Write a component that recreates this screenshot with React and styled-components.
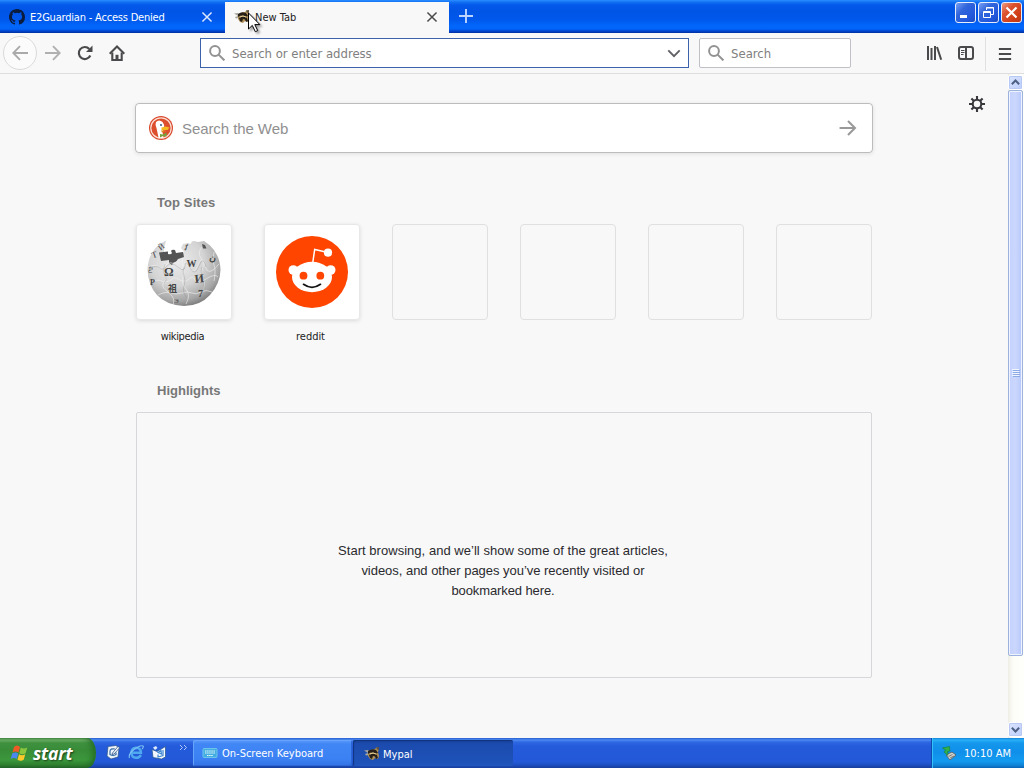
import React from "react";
import styled, { createGlobalStyle, css } from "styled-components";

const tahoma = `"DejaVu Sans Condensed", "DejaVu Sans", Tahoma, sans-serif`;
const arial = `"Liberation Sans", Arial, sans-serif`;

const GlobalStyle = createGlobalStyle`
  *, *::before, *::after { box-sizing: border-box; }
  body { margin: 0; overflow: hidden; background: #f8f8f8; }
  svg { display: block; flex: none; }
`;

const Desktop = styled.div`
  position: relative;
  width: 1024px;
  height: 768px;
  display: flex;
  flex-direction: column;
  overflow: hidden;
  font-family: ${tahoma};
`;

const Label = styled.span`
  white-space: nowrap;
  font-size: ${(p) => p.$size || 11}px;
  letter-spacing: ${(p) => p.$track || 0}px;
  color: ${(p) => p.$color || "#222"};
`;

/* Title bar and tabs */
const TitleBar = styled.header`
  height: 33px;
  flex: none;
  display: flex;
  background: linear-gradient(#2c8cff 0, #1272f4 2px, #0458ea 5px, #0055e5 12px, #0058ec 20px, #0367fc 26px, #0264f8 29px, #0144cf 31px, #002fa0 33px);
`;

const Tab = styled.div`
  width: ${(p) => (p.$active ? 224 : 225)}px;
  display: flex;
  align-items: center;
  padding: 1px 11px 0 9px;
  ${(p) =>
    p.$active &&
    css`
      margin-top: 2px;
      padding: 0 10px 1px 9px;
      background: #f8f8f8;
    `}
`;

const TabTitle = styled(Label)`
  flex: 1;
  margin-left: ${(p) => p.$gap}px;
`;

const NewTabButton = styled.div`
  padding: 9px 0 0 10px;
`;

const WindowControls = styled.div`
  display: flex;
  gap: 2px;
  margin-left: auto;
  padding: 2px 2px 0 0;
`;

const ControlButton = styled.div`
  width: 21px;
  height: 21px;
  border: 1px solid #e6edfb;
  border-radius: 3px;
  background: ${(p) =>
    p.$close
      ? "linear-gradient(135deg, #ee9b82, #dc5230 35%, #cf3d15 75%, #b83a1d)"
      : "linear-gradient(135deg, #7aa0f5, #3266dc 35%, #2257dc 75%, #184bc0)"};
`;

/* Navigation toolbar */
const Toolbar = styled.nav`
  height: 41px;
  flex: none;
  display: flex;
  align-items: center;
  background: #f8f8f8;
  border-bottom: 1px solid #dedee0;
`;

const BackButton = styled.div`
  width: 34px;
  height: 34px;
  margin-left: 3px;
  border: 1px solid #dadada;
  border-radius: 50%;
  background: #fbfbfb;
  display: grid;
  place-items: center;
`;

const ToolButton = styled.div`
  width: 32px;
  height: 32px;
  display: grid;
  place-items: center;
`;

const NavButtons = styled.div`
  display: flex;
  align-items: center;
  width: 200px;
`;

const Field = styled.div`
  width: ${(p) => p.$width}px;
  height: 30px;
  margin-right: 10px;
  padding: 0 7px 0 8px;
  display: flex;
  align-items: center;
  gap: 7px;
  background: #fff;
  border: 1px solid ${(p) => (p.$focused ? "#3c62ac" : "#c0c0c8")};
  border-radius: ${(p) => (p.$focused ? 0 : 2)}px;
  svg:last-child { margin-left: auto; }
`;

const ToolGroup = styled.div`
  margin-left: auto;
  display: flex;
  align-items: center;
  align-self: stretch;
`;

const MenuSlot = styled.div`
  align-self: stretch;
  margin: 4px 0 2px 3px;
  width: 39px;
  border-left: 1px solid #e0e0e3;
  display: grid;
  place-items: center;
`;

/* Page */
const Viewport = styled.div`
  flex: 1;
  display: flex;
  min-height: 0;
  background: #f8f8f8;
`;

const Page = styled.main`
  position: relative;
  width: 1008px;
  padding: 29px 135px 0;
  font-family: ${arial};
`;

const Preferences = styled.div`
  position: absolute;
  top: 22px;
  right: 23px;
`;

const WebSearch = styled.div`
  width: 738px;
  height: 50px;
  padding: 0 15px 0 13px;
  display: flex;
  align-items: center;
  background: #fff;
  border: 1px solid #bcbcbc;
  border-radius: 4px;
  box-shadow: 0 1px 4px rgba(12, 12, 13, 0.1);
`;

const WebSearchHint = styled(Label)`
  flex: 1;
  margin-left: 9px;
`;

const SectionTitle = styled.h2`
  margin: ${(p) => p.$top}px 0 0 22px;
  height: 16px;
  font: bold 13px/16px ${arial};
  letter-spacing: ${(p) => p.$track}px;
  color: #777;
`;

const SiteRow = styled.div`
  display: flex;
  gap: 32px;
  margin: 13px 0 0 1px;
`;

const Site = styled.div`
  width: 96px;
  display: flex;
  flex-direction: column;
  align-items: center;
`;

const Tile = styled.div`
  width: 96px;
  height: 96px;
  border-radius: 4px;
  overflow: hidden;
  border: ${(p) => (p.$filled ? "0" : "1px solid #e0e0e0")};
  background: ${(p) => (p.$filled ? "#fff" : "transparent")};
  box-shadow: ${(p) => (p.$filled ? "inset 0 0 0 1px #e8e8e8, 0 1px 4px rgba(12, 12, 13, 0.12)" : "none")};
`;

const SiteName = styled(Label)`
  height: 16px;
  margin: 9px 3px 0 0;
  line-height: 16px;
  font-family: ${tahoma};
`;

const HighlightsBox = styled.section`
  width: 736px;
  height: 266px;
  margin: 13px 0 0 1px;
  padding: 128px 2px 0 0;
  border: 1px solid #d7d7db;
  border-radius: 2px;
  text-align: center;
`;

const MessageLine = styled.div`
  height: 20px;
  font-size: 13px;
  line-height: 20px;
  letter-spacing: ${(p) => p.$track}px;
  color: #2a2a2e;
`;

/* Scroll bar */
const ScrollBar = styled.aside`
  width: 16px;
  display: flex;
  flex-direction: column;
  padding: 1px 1px 1px 0;
  background: linear-gradient(90deg, #eeede5, #fdfdf8 5px, #fefefb);
`;

const ScrollButton = styled.div`
  height: 15px;
  display: grid;
  place-items: center;
  border: 1px solid #fff;
  border-radius: 2px;
  background: linear-gradient(135deg, #dbe5ff, #bccdfb);
  box-shadow: inset 0 0 0 1px #b8c9f3;
`;

const ScrollThumb = styled.div`
  height: 566px;
  margin: 0 0 auto;
  display: grid;
  place-items: center;
  border: 1px solid #9db3de;
  border-radius: 2px;
  box-shadow: inset 0 0 0 1px #eef3ff;
  background: linear-gradient(90deg, #c4d2fc, #cbd6fd 50%, #b6c8fa);
`;

/* Taskbar */
const Taskbar = styled.footer`
  height: 30px;
  flex: none;
  display: flex;
  background: linear-gradient(#2a5fd0 0, #4b8af2 2px, #2f68e2 4px, #245bdb 8px, #2359d8 24px, #1d4ec0 27px, #183e9c 30px);
`;

const StartButton = styled.div`
  width: 96px;
  display: flex;
  align-items: center;
  padding-left: 10px;
  gap: 5px;
  border-radius: 0 9px 9px 0 / 0 15px 15px 0;
  background: linear-gradient(#4a8a4a 0, #6bb066 2px, #3f9140 5px, #388c38 12px, #3c983c 22px, #2f8030 27px, #22602a 30px);
  box-shadow: inset -6px 0 7px -3px #236b25;
`;

const StartText = styled.span`
  font: italic bold 17.5px/26px "Open Sans", "Noto Sans", sans-serif;
  letter-spacing: -0.2px;
  color: #fff;
  text-shadow: 1px 1px 2px rgba(0, 0, 0, 0.6);
`;

const QuickLaunch = styled.div`
  width: 97px;
  display: flex;
  align-items: flex-start;
  gap: 7px;
  padding: 6px 0 0 9px;
`;

const TaskButton = styled.div`
  width: ${(p) => p.$width}px;
  height: 26px;
  margin: 2px 1px 0 0;
  padding-left: ${(p) => p.$indent}px;
  padding-top: ${(p) => (p.$pressed ? 2 : 0)}px;
  display: flex;
  align-items: center;
  gap: ${(p) => (p.$pressed ? 3 : 4)}px;
  border-radius: 2px;
  background: ${(p) =>
    p.$pressed
      ? "linear-gradient(#17419a, #1c4bae 4px, #1e52b8 22px, #2156bd)"
      : "linear-gradient(#5a9bfb, #4186f5 4px, #3c81f3 19px, #3372e4)"};
  box-shadow: ${(p) =>
    p.$pressed ? "inset 1px 1px 1px #12347c" : "inset 1px 1px 0 #66a3fb, inset -1px -1px 0 #2b66d4"};
`;

const Tray = styled.div`
  width: 93px;
  margin-left: auto;
  display: flex;
  align-items: center;
  padding-left: 9px;
  gap: 7px;
  border-left: 1px solid #0c4bb0;
  box-shadow: inset 1px 0 0 #35c2fa;
  background: linear-gradient(#1482d8 0, #28b1f8 2px, #1597ec 5px, #0f8fea 14px, #139bf0 23px, #0f85d8 27px, #0a62b4 30px);
`;

const Cursor = styled.div`
  position: absolute;
  left: 248px;
  top: 12px;
  filter: drop-shadow(2px 2px 1px rgba(0, 0, 0, 0.35));
`;

const Stroke = ({ size = 16, color = "#4a4a4c", width = 2, d, children, ...rest }) => (
  <svg width={size} height={size} viewBox="0 0 16 16" fill="none" stroke={color} strokeWidth={width} {...rest}>
    {d && <path d={d} />}
    {children}
  </svg>
);

const CloseGlyph = ({ color }) => <Stroke size={14} color={color} width={1.7} d="M2.800 2.800l10.400 10.400M13.200 2.800l-10.400 10.400" />;

const SearchGlyph = () => (
  <Stroke color="#929292" width={2}>
    <circle cx="6" cy="6" r="4.9" />
    <path d="M9.6 9.6l5.8 5.8" />
  </Stroke>
);

const GitHubGlyph = () => (
  <svg width="16" height="16" viewBox="0 0 16 16">
    <path
      fill="#0b1c3c"
      d="M8 0C3.58 0 0 3.58 0 8c0 3.54 2.29 6.53 5.47 7.59.4.07.55-.17.55-.38 0-.19-.01-.82-.01-1.49-2.01.37-2.53-.49-2.69-.94-.09-.23-.48-.94-.82-1.13-.28-.15-.68-.52-.01-.53.63-.01 1.08.58 1.23.82.72 1.21 1.87.87 2.33.66.07-.52.28-.87.51-1.07-1.78-.2-3.64-.89-3.64-3.95 0-.87.31-1.59.82-2.15-.08-.2-.36-1.02.08-2.12 0 0 .67-.21 2.2.82a7.4 7.4 0 014 0c1.53-1.04 2.2-.82 2.2-.82.44 1.1.16 1.92.08 2.12.51.56.82 1.27.82 2.15 0 3.07-1.87 3.75-3.65 3.95.29.25.54.73.54 1.48 0 1.07-.01 1.93-.01 2.2 0 .21.15.46.55.38A8.01 8.01 0 0016 8c0-4.42-3.58-8-8-8z"
    />
  </svg>
);

const MypalGlyph = () => (
  <svg width="16" height="16" viewBox="0 0 16 16">
    <path d="M0 4.500l4-.5 2 2-2 1zM1 8l3-1 1 2-3 .5z" fill="#a7a59c" />
    <path d="M4 6q3-3 7-3l2-2 2 2-1 3 1 4-1 3-3-1-2 2-3-1-2-3z" fill="#b2935a" />
    <path d="M4 5q4-3 8-1l2 3-2 .5q-4-2-8 .5zM5 9q4-3 8 0l1 3-2 1-1-2.500-2-.5-1 3-2-1z" fill="#272019" />
    <path d="M6 8q3-2 6 0" stroke="#e6cf94" fill="none" />
    <path d="M12 1.500l3-.5v3l-2-.5z" fill="#5b5142" />
  </svg>
);

const Duck = () => (
  <svg width="24" height="24" viewBox="0 0 24 24">
    <circle cx="12" cy="12" r="12" fill="#d9492d" />
    <circle cx="12" cy="12" r="10.200" fill="#dd4f2c" stroke="#fbe0d6" strokeWidth="1.200" />
    <path d="M7 6q3-3 6.500 0 2 2 1.500 6l-1.500 4 1 5.500q-3 1-5 0L7.500 12q-1.500-4-.5-6z" fill="#fff" />
    <path d="M12.500 11.500l4-1 4 1-2 2.500-6 .5z" fill="#f6b91f" />
    <path d="M12 14.500l5 .5-4 1.500z" fill="#e0851c" />
    <path d="M11 18l3 .5 3.500-2v4l-3.500-.5-3 1.500z" fill="#76a23b" />
    <circle cx="12" cy="9" r=".9" fill="#2b4a72" />
  </svg>
);

const WikipediaArt = () => (
  <svg width="96" height="96" viewBox="0 0 96 96">
    <defs>
      <radialGradient id="globe" cx="0.4" cy="0.32" r="0.75">
        <stop offset="0" stopColor="#ececec" />
        <stop offset="0.5" stopColor="#d4d4d4" />
        <stop offset="0.8" stopColor="#a6a6a6" />
        <stop offset="1" stopColor="#6a6a6a" />
      </radialGradient>
    </defs>
    <path d="M30 16.500L24 20q-12 9-12.500 26Q12 61 21 71t27 11q16 0 26-11t10.500-25Q84 31 74 21.500L68 17l-6 1-4-1q-3 0-3 3l-3-1-5 1-2 4 3 4-4 3-5-3-4 3-7-1 0-5z" fill="url(#globe)" />
    <path d="M23 28.500l9-1 0 2.500q3 1 4-1l-1-2q1-2 4-1l1 3 7-1 1 5-6 2q-2 4-4 3l-2 3-3-2 0-3-8 1z" fill="#555" />
    <g fill="none" stroke="#f1f1f1" strokeWidth="0.600">
      <path d="M12 43q8-3 11 0t7-2 11 1 7-1 5 2 9-2 7 1 14-2" />
      <path d="M14 58q9-3 12-1t7 0 5-3 6 2 9-1 6 1 11-1 12-2" />
      <path d="M22 71q8-4 13-2t11 0 10 0 9-1 11 0" />
      <path d="M29 39q-3 7 0 11t-1 8 4 10 5 13M47 34q-2 5 0 9t0 10 3 12 0 15M66 23q-5 6-1 11t1 12 1 10-2 15M78 28q-2 8 0 13t0 16" />
    </g>
    <g fill="none" stroke="#8c8c8c" strokeWidth="0.350">
      <path d="M13 44q8-3 11 0t7-2 11 1 7-1 5 2 9-2 7 1M29 40q-3 7 0 11t-1 8M48 43q-2 5 0 9t0 10 3 12M66 43q-2 5 1 13t-2 14" />
    </g>
    <g fill="#444" fontFamily='"Liberation Serif", serif'>
      <text x="28" y="52" fontSize="12" fontWeight="bold">Ω</text>
      <text x="50.500" y="42.500" fontSize="10" fontWeight="bold">W</text>
      <text x="58.500" y="58.500" fontSize="12" fontWeight="bold" transform="rotate(-6 63 54)">И</text>
      <text x="32" y="67.500" fontSize="9" fontWeight="bold" fontFamily='"Noto Sans CJK SC", sans-serif'>祖</text>
      <text x="62" y="73" fontSize="10" fontWeight="bold">7</text>
      <text x="73" y="37" fontSize="9" fontWeight="bold" transform="rotate(15 75 35)">ن</text>
      <text x="16" y="34" fontSize="9" transform="rotate(-20 18 32)">T</text>
      <text x="13" y="46" fontSize="8" transform="rotate(90 15 44)">வ</text>
      <text x="23" y="26" fontSize="8" transform="rotate(-35 25 24)">Й</text>
      <text x="48" y="27" fontSize="9" transform="rotate(15 50 25)">វ</text>
      <text x="14" y="61" fontSize="8" fontWeight="bold">P</text>
      <text x="38" y="79" fontSize="7">Э</text>
    </g>
    <path d="M66 20l3 1 1.500 3.500-3.500 0z" fill="#555" />
  </svg>
);

const RedditArt = () => (
  <svg width="96" height="96" viewBox="0 0 96 96">
    <circle cx="48" cy="48" r="36" fill="#ff4500" />
    <path d="M48.700 39l2-13.500 10 2.300" fill="none" stroke="#fff" strokeWidth="1.500" />
    <g fill="#fff">
      <circle cx="64" cy="28.600" r="4.100" />
      <circle cx="29.300" cy="46" r="4.800" />
      <circle cx="66.700" cy="46" r="4.800" />
      <ellipse cx="48" cy="53" rx="20" ry="15.200" />
    </g>
    <g fill="#ff4500">
      <circle cx="39.500" cy="51.700" r="3.900" />
      <circle cx="56.300" cy="51.700" r="3.900" />
    </g>
    <path d="M39.500 60.300q8.500 6 17 0" fill="none" stroke="#111" strokeWidth="1.700" strokeLinecap="round" />
  </svg>
);

const WindowsFlag = () => (
  <svg width="18" height="18" viewBox="0 0 18 18">
    <path d="M4 3q3-3 6 0L8.500 8.500q-3-2-6 0z" fill="#ef5b25" />
    <path d="M10.800 3.500q3 2 6.500 0l-1.700 5.700q-3 2-6.300 0z" fill="#8cc63f" />
    <path d="M2.200 9.500q3-2 6 0L6.700 15q-3-2-6 0z" fill="#4a87ee" />
    <path d="M9 10.200q3 2 6.300 0l-1.600 5.600q-3 2-6.200 0z" fill="#fbc92b" />
  </svg>
);

const Keyboard = () => (
  <svg width="16" height="16" viewBox="0 0 16 16">
    <rect x="1" y="3.500" width="14" height="9" rx="1" fill="#45aee0" stroke="#6cc4ec" />
    <path d="M3 6h10M3 8h10M5 10.500h6" stroke="#e8fbff" strokeDasharray="1.500 .6" />
  </svg>
);

const DesktopShortcut = () => (
  <svg width="16" height="16" viewBox="0 0 16 16">
    <path d="M3 2.500l8-1 3 2.500-1 9-7 2-4-3z" fill="#edf4fb" stroke="#2a5283" strokeWidth=".7" />
    <path d="M10 5q-5-1-5 2.500v3q3 2 6 0V8.500" fill="none" stroke="#3a6ca5" strokeWidth="1.200" />
    <path d="M7.500 9L13 2.500l1.700 1.200L9 10l-2 .5z" fill="#fff" stroke="#2b5283" strokeWidth=".8" />
  </svg>
);

const ExplorerGlyph = () => (
  <svg width="16" height="16" viewBox="0 0 16 16">
    <path d="M13 11q-2 3-5 2.800-4.500-.3-4.700-5Q3.500 4 8 3.700q5 .3 5 5H4" fill="none" stroke="#4fa9ee" strokeWidth="2.400" />
    <path d="M1.500 14Q0 10 6 5.500T15 2q1 1-1 3" fill="none" stroke="#7cc2f6" strokeWidth="1.100" />
  </svg>
);

const OutlookGlyph = () => (
  <svg width="16" height="16" viewBox="0 0 16 16">
    <path d="M1 5.500l5 2 8.500-5v10.500l-4 2-8.500-1.500z" fill="#f1f7fd" stroke="#2d5c96" strokeWidth=".8" />
    <path d="M2 3.500l3-1.500 1.500 2-2.500 2z" fill="#dcecfb" />
    <path d="M12 6v5.500l-5 1.500v-2.500M7 8.500l3-2 .5 3.500z" fill="none" stroke="#3d87d2" strokeWidth="1.200" />
  </svg>
);

const TrayGlyph = () => (
  <svg width="16" height="16" viewBox="0 0 16 16">
    <path d="M5 10l6-3 4 3-6 5z" fill="#d0d3ce" stroke="#50585c" strokeWidth=".8" />
    <path d="M7.500 11.500l4-2M9 13l4-2" stroke="#666" strokeWidth=".8" />
    <path d="M1.500 3l7-1.500.5 4.500-2.500.5.500 4-4-3.500 1.500-2z" fill="#2fb04a" stroke="#188038" strokeWidth=".6" />
  </svg>
);

const sites = [
  { name: "wikipedia", art: <WikipediaArt />, track: -0.35 },
  { name: "reddit", art: <RedditArt />, track: -0.05 },
  {}, {}, {}, {},
];

const message = [
  ["Start browsing, and we’ll show some of the great articles,", 0.03],
  ["videos, and other pages you’ve recently visited or", -0.03],
  ["bookmarked here.", -0.1],
];

export default function App() {
  return (
    <Desktop>
      <GlobalStyle />
      <TitleBar>
        <Tab>
          <GitHubGlyph />
          <TabTitle $gap={5} $color="#fff" $track={-0.2}>E2Guardian - Access Denied</TabTitle>
          <CloseGlyph color="#dce9ff" />
        </Tab>
        <Tab $active>
          <MypalGlyph />
          <TabTitle $gap={5} $track={0}>New Tab</TabTitle>
          <CloseGlyph color="#4a4a4a" />
        </Tab>
        <NewTabButton>
          <Stroke size={14} color="#bcd4ff" width={2.2} d="M8 0v16M0 8h16" />
        </NewTabButton>
        <WindowControls>
          <ControlButton>
            <svg width="19" height="19"><path d="M4 12h7v3H4z" fill="#fff" /></svg>
          </ControlButton>
          <ControlButton>
            <svg width="19" height="19" fill="none" stroke="#fff">
              <path d="M7.500 7V4.500h7v7H12M7 5h8" />
              <path d="M4.500 8.500h7v6h-7zM4 9.500h8" />
            </svg>
          </ControlButton>
          <ControlButton $close>
            <svg width="19" height="19"><path d="M4.500 4.500l10 10M14.500 4.500l-10 10" stroke="#fff" strokeWidth="2.200" /></svg>
          </ControlButton>
        </WindowControls>
      </TitleBar>

      <Toolbar>
        <NavButtons>
          <BackButton><Stroke color="#aaa" width={1.900} d="M16 8H1.500M8 1.200L1.300 8 8 14.800" /></BackButton>
          <ToolButton><Stroke color="#b0b0b0" width={1.900} d="M0 8h14.500M8 1.200L14.700 8 8 14.800" /></ToolButton>
          <ToolButton>
            <Stroke width={2.200}>
              <path d="M13.300 10.500A6 6 0 1 1 12.300 4" />
              <path d="M15.500 .5v6.500H9z" fill="#4a4a4c" stroke="none" />
            </Stroke>
          </ToolButton>
          <ToolButton>
            <Stroke width={2.100}>
              <path d="M.7 8.700L8 1.500l7.300 7.200" />
              <path d="M3.300 7.500V15h9.400V7.500" />
              <path d="M6.500 15V9.800h3V15" fill="#4a4a4c" stroke="none" />
            </Stroke>
          </ToolButton>
        </NavButtons>
        <Field $width={489} $focused>
          <SearchGlyph />
          <Label $size={13} $color="#808080" $track={-0.03}>Search or enter address</Label>
          <Stroke size={14} color="#606065" width={2.200} d="M1.500 5L8 11.500 14.500 5" />
        </Field>
        <Field $width={152}>
          <SearchGlyph />
          <Label $size={13} $color="#808080">Search</Label>
        </Field>
        <ToolGroup>
          <ToolButton>
            <Stroke width={2} d="M2 1v14M5.500 3v12M9 1v14M11 2l4.200 12.700" />
          </ToolButton>
          <ToolButton>
            <Stroke width={2}>
              <rect x="1" y="2" width="14" height="12" rx="2" />
              <path d="M8 2v12" />
              <path d="M3 5.500h3.500M3 7.500h3.500M3 9.500h2.500" strokeWidth="1" />
            </Stroke>
          </ToolButton>
          <MenuSlot><Stroke size={14} width={2.200} d="M1 2.300h14M1 8h14M1 13.700h14" /></MenuSlot>
        </ToolGroup>
      </Toolbar>

      <Viewport>
        <Page>
          <Preferences>
            <Stroke color="#38383d" width={2.100}>
              <circle cx="8" cy="8" r="4.300" />
              <path d="M8 0v3.500M8 12.500V16M0 8h3.500M12.500 8H16M2.400 2.400L5 5M11 11l2.600 2.600M13.600 2.400L11 5M5 11l-2.600 2.600" />
            </Stroke>
          </Preferences>
          <WebSearch>
            <Duck />
            <WebSearchHint $size={15} $color="#909090" $track={-0.08}>Search the Web</WebSearchHint>
            <Stroke size={18} color="#999" width={1.800} d="M.5 8h13.500M8 1.800L14.200 8l-6.200 6.200" />
          </WebSearch>
          <SectionTitle $top={42} $track={0.1}>Top Sites</SectionTitle>
          <SiteRow>
            {sites.map((site, i) => (
              <Site key={i}>
                <Tile $filled={!!site.name}>{site.art}</Tile>
                <SiteName $track={site.track}>{site.name}</SiteName>
              </Site>
            ))}
          </SiteRow>
          <SectionTitle $top={38} $track={0}>Highlights</SectionTitle>
          <HighlightsBox>
            {message.map(([line, track]) => (
              <MessageLine key={line} $track={track}>{line}</MessageLine>
            ))}
          </HighlightsBox>
        </Page>
        <ScrollBar>
          <ScrollButton><Stroke size={9} color="#4d6185" width={3.600} d="M1.500 11L8 4.500l6.500 6.500" /></ScrollButton>
          <ScrollThumb>
            <svg width="8" height="8"><path d="M0 .5h7M0 2.500h7M0 4.500h7M0 6.500h7" stroke="#f0f5ff" /><path d="M1 1.500h7M1 3.500h7M1 5.500h7M1 7.500h7" stroke="#8daae8" /></svg>
          </ScrollThumb>
          <ScrollButton><Stroke size={9} color="#4d6185" width={3.600} d="M1.500 5L8 11.500 14.500 5" /></ScrollButton>
        </ScrollBar>
      </Viewport>

      <Taskbar>
        <StartButton>
          <WindowsFlag />
          <StartText>start</StartText>
        </StartButton>
        <QuickLaunch>
          <DesktopShortcut />
          <ExplorerGlyph />
          <OutlookGlyph />
          <svg width="15" height="8" viewBox="-5 0 15 8" fill="none" stroke="#b4ccfa"><path d="M1 1l2.500 2.500L1 6M5 1l2.500 2.500L5 6" /></svg>
        </QuickLaunch>
        <TaskButton $width={159} $indent={9}>
          <Keyboard />
          <Label $color="#fff">On-Screen Keyboard</Label>
        </TaskButton>
        <TaskButton $width={160} $indent={11} $pressed>
          <MypalGlyph />
          <Label $color="#fff">Mypal</Label>
        </TaskButton>
        <Tray>
          <TrayGlyph />
          <Label $color="#fff">10:10 AM</Label>
        </Tray>
      </Taskbar>

      <Cursor>
        <svg width="13" height="21" viewBox="0 0 13 21">
          <path d="M.5 1v16l3.800-3.600 3 6.300 2.400-1.100-2.900-6h5.100z" fill="#fff" stroke="#000" />
        </svg>
      </Cursor>
    </Desktop>
  );
}
